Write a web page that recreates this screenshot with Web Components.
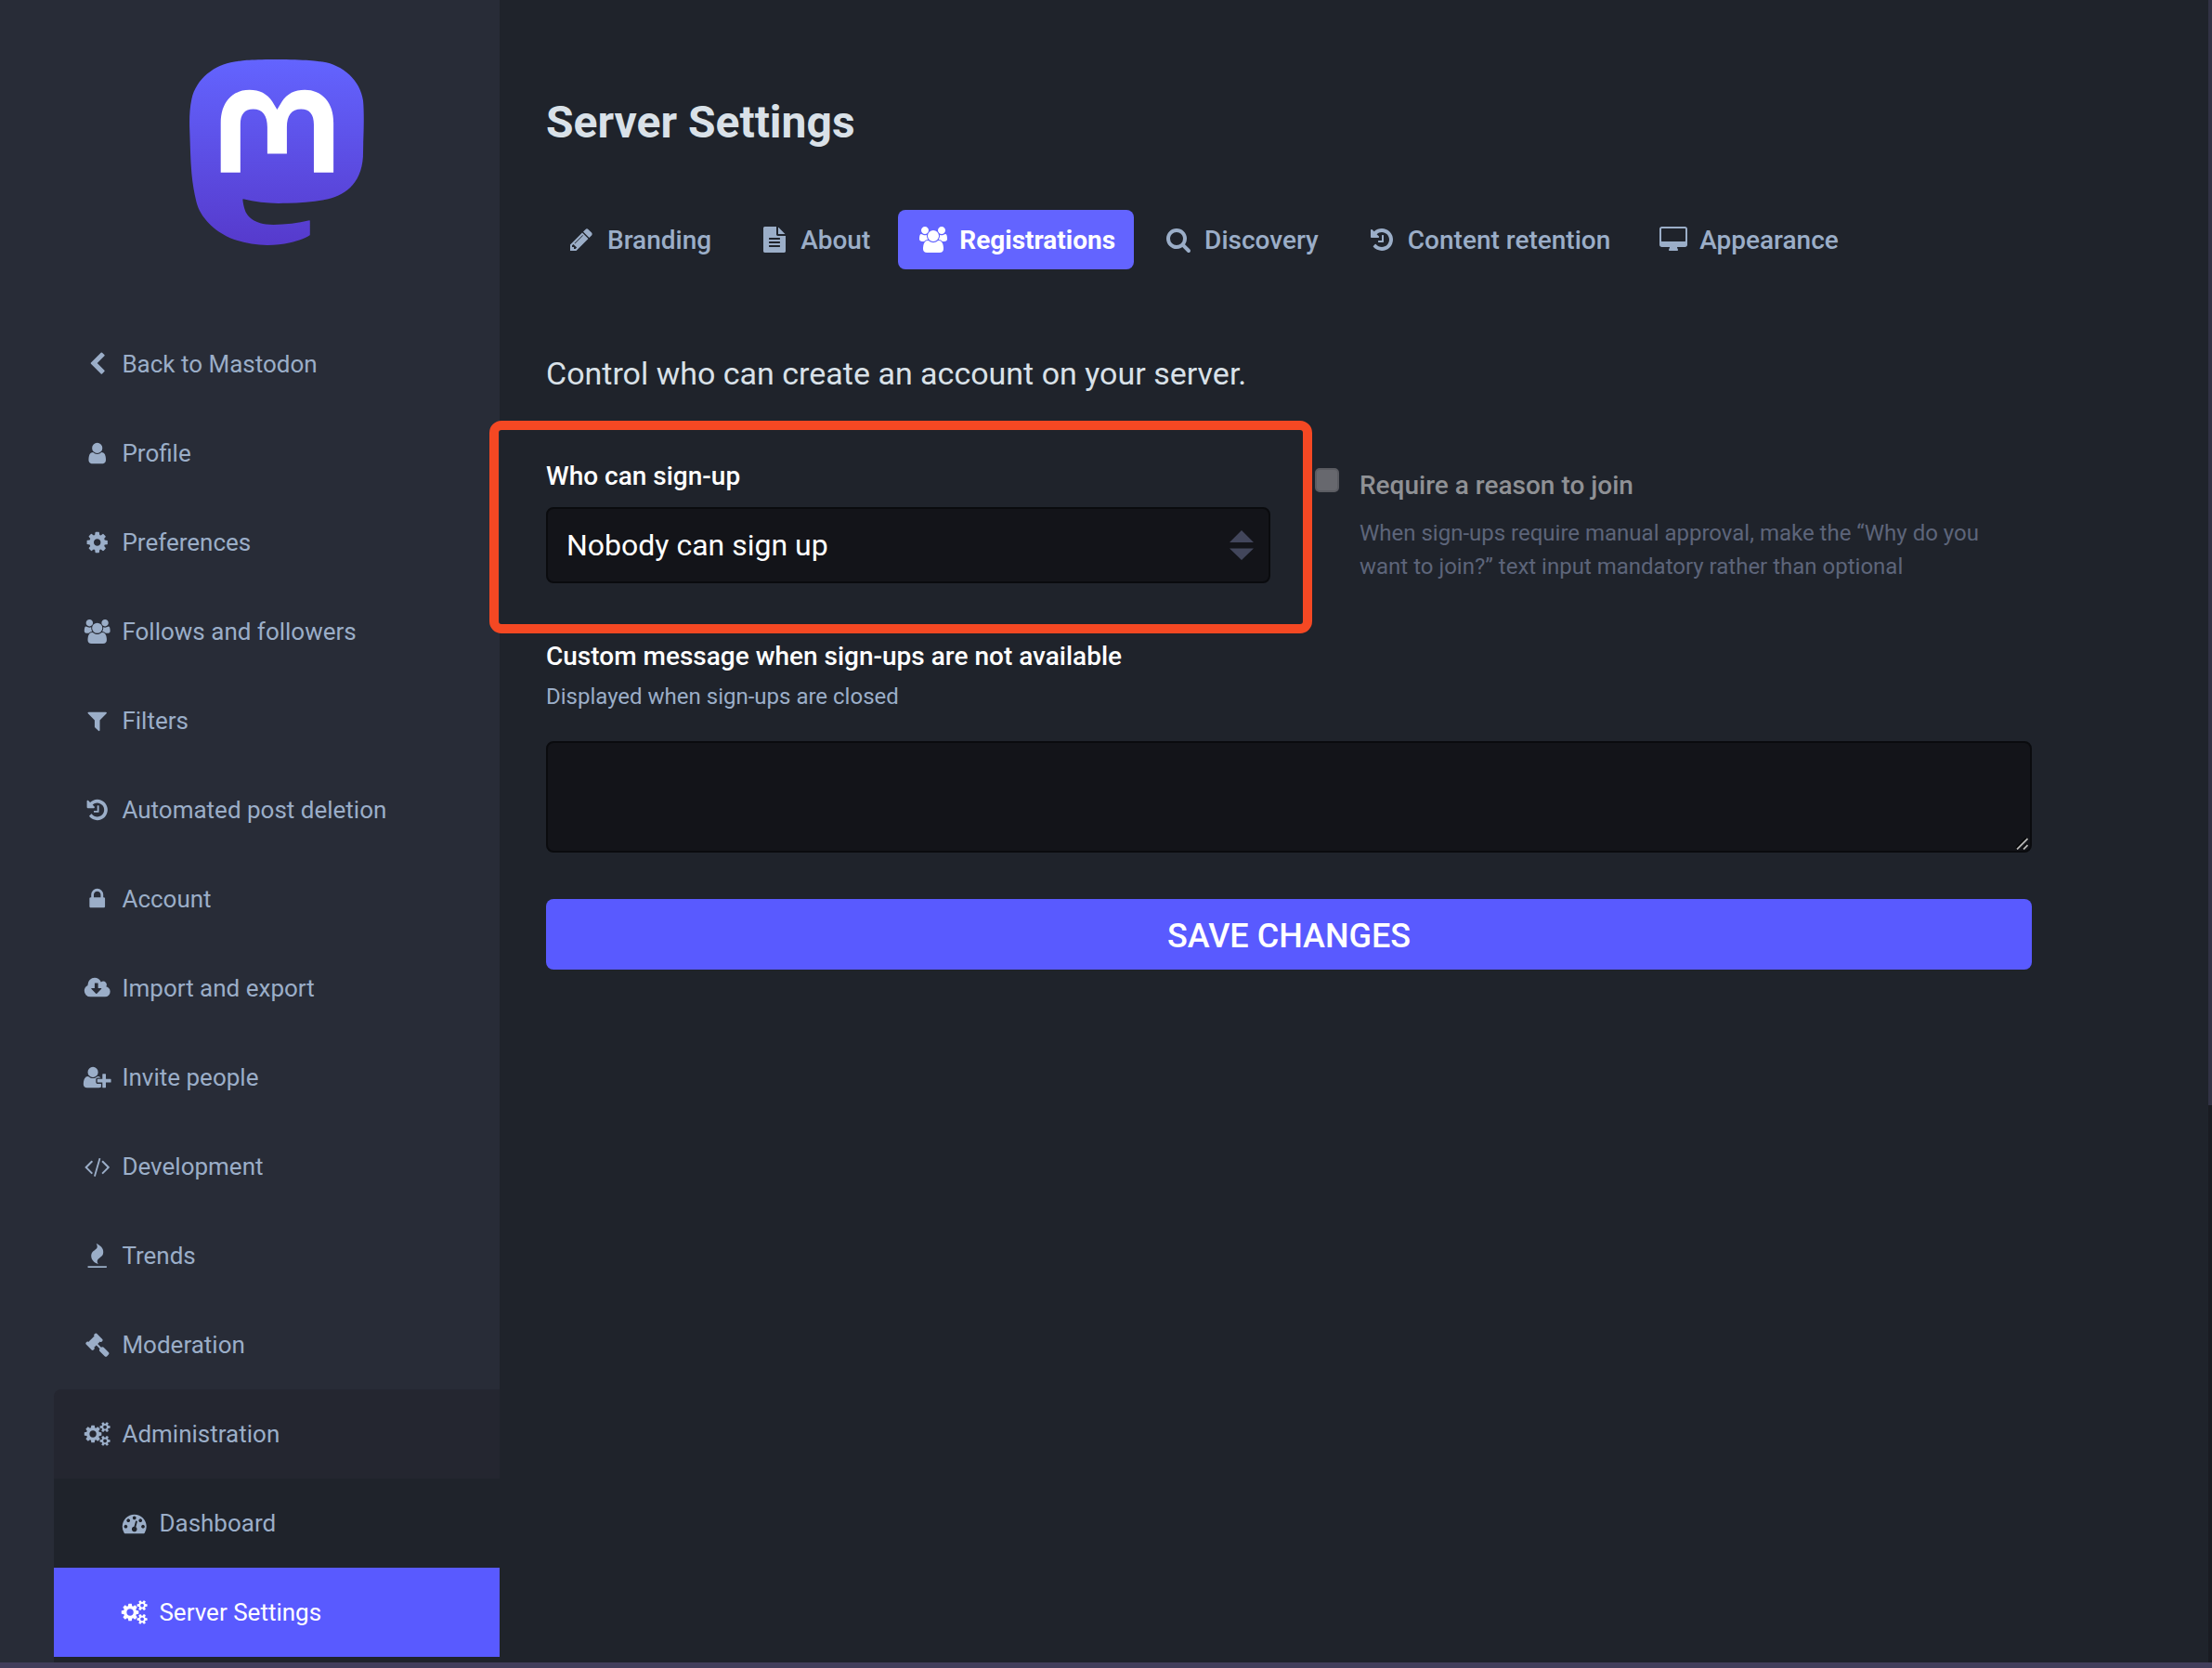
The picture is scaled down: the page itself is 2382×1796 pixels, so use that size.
<!DOCTYPE html>
<html lang="en">
<head>
<meta charset="utf-8">
<title>Server Settings</title>
<style>
html,body{margin:0;height:100%;background:#1f232b}
body{font-family:Roboto,"Liberation Sans",sans-serif;overflow:hidden}
</style>
</head>
<body>
<admin-shell>
  <admin-sidebar slot="sidebar">
    <menu-item icon="chevron">Back to Mastodon</menu-item>
    <menu-item icon="user">Profile</menu-item>
    <menu-item icon="cog">Preferences</menu-item>
    <menu-item icon="users">Follows and followers</menu-item>
    <menu-item icon="filter">Filters</menu-item>
    <menu-item icon="history">Automated post deletion</menu-item>
    <menu-item icon="lock">Account</menu-item>
    <menu-item icon="cloud">Import and export</menu-item>
    <menu-item icon="userplus">Invite people</menu-item>
    <menu-item icon="code">Development</menu-item>
    <menu-item icon="fire">Trends</menu-item>
    <menu-item icon="gavel">Moderation</menu-item>
    <menu-item icon="cogs" open>Administration</menu-item>
    <menu-item icon="gauge" nested>Dashboard</menu-item>
    <menu-item icon="cogs" nested selected>Server Settings</menu-item>
  </admin-sidebar>
  <settings-page>
    <tab-link slot="tabs" icon="pencil">Branding</tab-link>
    <tab-link slot="tabs" icon="file">About</tab-link>
    <tab-link slot="tabs" icon="users" selected>Registrations</tab-link>
    <tab-link slot="tabs" icon="search">Discovery</tab-link>
    <tab-link slot="tabs" icon="history">Content retention</tab-link>
    <tab-link slot="tabs" icon="desktop">Appearance</tab-link>
  </settings-page>
</admin-shell>
<script>
const ICONS = {
chevron:[1792,"M1427 301l-531 531 531 531q19 19 19 45t-19 45l-166 166q-19 19-45 19t-45-19l-742-742q-19-19-19-45t19-45l742-742q19-19 45-19t45 19l166 166q19 19 19 45t-19 45z"],
user:[1792,"M1536 1399q0 109-62.5 187t-150.5 78h-854q-88 0-150.5-78t-62.5-187q0-85 8.5-160.5t31.5-152 58.5-131 94-89 134.5-34.5q131 128 313 128t313-128q76 0 134.5 34.5t94 89 58.5 131 31.5 152 8.5 160.5zm-256-887q0 159-112.5 271.5t-271.5 112.5-271.5-112.5-112.5-271.5 112.5-271.5 271.5-112.5 271.5 112.5 112.5 271.5z"],
cog:[1792,"M1152 896q0-106-75-181t-181-75-181 75-75 181 75 181 181 75 181-75 75-181zm512-109v222q0 12-8 23t-20 13l-185 28q-19 54-39 91 35 50 107 138 10 12 10 25t-9 23q-27 37-99 108t-94 71q-12 0-26-9l-138-108q-44 23-91 38-16 136-29 186-7 28-36 28h-222q-14 0-24.5-8.5t-11.5-21.5l-28-184q-49-16-90-37l-141 107q-10 9-25 9-14 0-25-11-126-114-165-168-7-10-7-23 0-12 8-23 15-21 51-66.5t54-70.5q-27-50-41-99l-183-27q-13-2-21-12.5t-8-23.5v-222q0-12 8-23t19-13l186-28q14-46 39-92-40-57-107-138-10-12-10-24 0-10 9-23 26-36 98.5-107.5t94.5-71.5q13 0 26 10l138 107q44-23 91-38 16-136 29-186 7-28 36-28h222q14 0 24.5 8.5t11.5 21.5l28 184q49 16 90 37l142-107q9-9 24-9 13 0 25 10 129 119 165 170 7 8 7 22 0 12-8 23-15 21-51 66.5t-54 70.5q26 50 41 98l183 28q13 2 21 12.5t8 23.5z"],
users:[1920,"M593 896q-162 5-265 128h-134q-82 0-138-40.5t-56-118.5q0-353 124-353 6 0 43.5 21t97.5 42.5 119 21.5q67 0 133-23-5 37-5 66 0 139 81 256zm1071 637q0 120-73 189.5t-194 69.5h-874q-121 0-194-69.5t-73-189.5q0-53 3.5-103.5t14-109 26.5-108.5 43-97.5 62-81 85.5-53.5 111.5-20q10 0 43 21.5t73 48 107 48 135 21.5 135-21.5 107-48 73-48 43-21.5q61 0 111.5 20t85.5 53.5 62 81 43 97.5 26.5 108.5 14 109 3.5 103.5zm-1024-1277q0 106-75 181t-181 75-181-75-75-181 75-181 181-75 181 75 75 181zm704 384q0 159-112.5 271.5t-271.5 112.5-271.5-112.5-112.5-271.5 112.5-271.5 271.5-112.5 271.5 112.5 112.5 271.5zm576 225q0 78-56 118.5t-138 40.5h-134q-103-123-265-128 81-117 81-256 0-29-5-66 66 23 133 23 59 0 119-21.5t97.5-42.5 43.5-21q124 0 124 353zm-128-609q0 106-75 181t-181 75-181-75-75-181 75-181 181-75 181 75 75 181z"],
filter:[1792,"M1595 295q17 41-14 70l-493 493v742q0 42-39 59-13 5-25 5-27 0-45-19l-256-256q-19-19-19-45v-486l-493-493q-31-29-14-70 17-39 59-39h1280q42 0 59 39z"],
history:[1792,"M1664 896q0 156-61 298t-164 245-245 164-298 61q-172 0-327-72.5t-264-204.5q-7-10-6.5-22.5t8.5-20.5l137-138q10-9 25-9 16 2 23 12 73 95 179 147t225 52q104 0 198.5-40.5t163.5-109.5 109.5-163.5 40.5-198.5-40.5-198.5-109.5-163.5-163.5-109.5-198.5-40.5q-98 0-188 35.5t-160 101.5l137 138q31 30 14 69-17 40-59 40h-448q-26 0-45-19t-19-45v-448q0-42 40-59 39-17 69 14l130 129q107-101 244.5-156.5t284.5-55.5q156 0 298 61t245 164 164 245 61 298zm-640-288v448q0 14-9 23t-23 9h-320q-14 0-23-9t-9-23v-64q0-14 9-23t23-9h224v-352q0-14 9-23t23-9h64q14 0 23 9t9 23z"],
lock:[1792,"M640 768h512v-192q0-106-75-181t-181-75-181 75-75 181v192zm832 96v576q0 40-28 68t-68 28h-960q-40 0-68-28t-28-68v-576q0-40 28-68t68-28h32v-192q0-184 132-316t316-132 316 132 132 316v192h32q40 0 68 28t28 68z"],
cloud:[1920,"M1280 928q0-14-9-23t-23-9h-224v-352q0-13-9.5-22.5t-22.5-9.5h-192q-13 0-22.5 9.5t-9.5 22.5v352h-224q-13 0-22.5 9.5t-9.5 22.5q0 14 9 23l352 352q9 9 23 9t23-9l351-351q10-12 10-24zm640 224q0 159-112.5 271.5t-271.5 112.5h-1088q-185 0-316.5-131.5t-131.5-316.5q0-130 70-240t188-165q-2-30-2-43 0-212 150-362t362-150q156 0 285.5 87t188.5 231q71-62 166-62 106 0 181 75t75 181q0 76-41 138 130 31 213.5 135.5t83.5 238.5z"],
userplus:[2048,"M704 896q-159 0-271.5-112.5t-112.5-271.5 112.5-271.5 271.5-112.5 271.5 112.5 112.5 271.5-112.5 271.5-271.5 112.5zm960 128h352q13 0 22.5 9.5t9.5 22.5v192q0 13-9.5 22.5t-22.5 9.5h-352v352q0 13-9.5 22.5t-22.5 9.5h-192q-13 0-22.5-9.5t-9.5-22.5v-352h-352q-13 0-22.5-9.5t-9.5-22.5v-192q0-13 9.5-22.5t22.5-9.5h352v-352q0-13 9.5-22.5t22.5-9.5h192q13 0 22.5 9.5t9.5 22.5v352zm-736 224q0 52 38 90t90 38h256v238q-68 50-171 50h-874q-121 0-194-69t-73-190q0-53 3.5-103.5t14-109 26.5-108.5 43-97.5 62-81 85.5-53.5 111.5-20q19 0 39 17 79 61 154.5 91.5t164.5 30.5 164.5-30.5 154.5-91.5q20-17 39-17 132 0 217 96h-223q-52 0-90 38t-38 90v192z"],
code:[1920,"M617 1399l-50 50q-10 10-23 10t-23-10l-466-466q-10-10-10-23t10-23l466-466q10-10 23-10t23 10l50 50q10 10 10 23t-10 23l-393 393 393 393q10 10 10 23t-10 23zm591-1067l-373 1291q-4 13-15.5 19.5t-23.5 2.5l-62-17q-13-4-19.5-15.5t-2.5-24.5l373-1291q4-13 15.5-19.5t23.5-2.5l62 17q13 4 19.5 15.5t2.5 24.5zm657 651l-466 466q-10 10-23 10t-23-10l-50-50q-10-10-10-23t10-23l393-393-393-393q-10-10-10-23t10-23l50-50q10-10 23-10t23 10l466 466q10 10 10 23t-10 23z"],
fire:[1792,"M1600 1696v64q0 13-9.5 22.5t-22.5 9.5h-1344q-13 0-22.5-9.5t-9.5-22.5v-64q0-13 9.5-22.5t22.5-9.5h1344q13 0 22.5 9.5t9.5 22.5zm-256-1056q0 78-24.5 144t-64 112.5-87.5 88-96 77.5-87.5 72-64 81.5-24.5 96.5q0 96 67 224l-4-1 1 1q-90-41-160-83t-138.5-100-113.5-122.5-72.5-150.5-27.5-184q0-78 24.5-144t64-112.5 87.5-88 96-77.5 87.5-72 64-81.5 24.5-96.5q0-94-66-224l3 1-1-1q90 41 160 83t138.5 100 113.5 122.5 72.5 150.5 27.5 184z"],
gavel:[1792,"M1771 1536q0 53-37 90l-107 108q-39 37-91 37-53 0-90-37l-363-364q-38-36-38-90 0-53 43-96l-256-256-126 126q-14 14-34 14t-34-14q2 2 12.5 12t12.5 13 10 11.5 10 13.5 6 13.5 5.5 16.5 1.5 18q0 38-28 68-3 3-16.5 18t-19 20.5-18.5 16.5-22 15.5-22 9-26 4.5q-40 0-68-28l-408-408q-28-28-28-68 0-13 4.5-26t9-22 15.5-22 16.5-18.5 20.5-19 18-16.5q30-28 68-28 10 0 18 1.5t16.5 5.5 13.5 6 13.5 10 11.5 10 13 12.5 12 12.5q-14-14-14-34t14-34l348-348q14-14 34-14t34 14q-2-2-12.5-12t-12.5-13-10-11.5-10-13.5-6-13.5-5.5-16.5-1.5-18q0-38 28-68 3-3 16.5-18t19-20.5 18.5-16.5 22-15.5 22-9 26-4.5q40 0 68 28l408 408q28 28 28 68 0 13-4.5 26t-9 22-15.5 22-16.5 18.5-20.5 19-18 16.5q-30 28-68 28-10 0-18-1.5t-16.5-5.5-13.5-6-13.5-10-11.5-10-13-12.5-12-12.5q14 14 14 34t-14 34l-126 126 256 256q43-43 96-43 52 0 91 37l363 363q37 39 37 91z"],
cogs:[1920,"M896 896q0-106-75-181t-181-75-181 75-75 181 75 181 181 75 181-75 75-181zm768 512q0-52-38-90t-90-38-90 38-38 90q0 53 37.5 90.5t90.5 37.5 90.5-37.5 37.5-90.5zm0-1024q0-52-38-90t-90-38-90 38-38 90q0 53 37.5 90.5t90.5 37.5 90.5-37.5 37.5-90.5zm-384 421v185q0 10-7 19.5t-16 10.5l-155 24q-11 35-32 76 34 48 90 115 7 11 7 20 0 12-7 19-23 30-82.5 89.5t-78.5 59.5q-11 0-21-7l-115-90q-37 19-77 31-11 108-23 155-7 24-30 24h-186q-11 0-20-7.5t-10-17.5l-23-153q-34-10-75-31l-118 89q-7 7-20 7-11 0-21-8-144-133-144-160 0-9 7-19 10-14 41-53t47-61q-23-44-35-82l-152-24q-10-1-17-9.5t-7-19.5v-185q0-10 7-19.5t16-10.5l155-24q11-35 32-76-34-48-90-115-7-11-7-20 0-12 7-20 22-30 82-89t79-59q11 0 21 7l115 90q34-18 77-32 11-108 23-154 7-24 30-24h186q11 0 20 7.5t10 17.5l23 153q34 10 75 31l118-89q8-7 20-7 11 0 21 8 144 133 144 160 0 8-7 19-12 16-42 54t-45 60q23 48 34 82l152 23q10 2 17 10.5t7 19.5zm640 533v140q0 16-149 31-12 27-30 52 51 113 51 138 0 4-4 7-122 71-124 71-8 0-46-47t-52-68q-20 2-30 2t-30-2q-14 21-52 68t-46 47q-2 0-124-71-4-3-4-7 0-25 51-138-18-25-30-52-149-15-149-31v-140q0-16 149-31 13-29 30-52-51-113-51-138 0-4 4-7 4-2 35-20t59-34 30-16q8 0 46 46.5t52 67.5q20-2 30-2t30 2q51-71 92-112l6-2q4 0 124 70 4 3 4 7 0 25-51 138 17 23 30 52 149 15 149 31zm0-1024v140q0 16-149 31-12 27-30 52 51 113 51 138 0 4-4 7-122 71-124 71-8 0-46-47t-52-68q-20 2-30 2t-30-2q-14 21-52 68t-46 47q-2 0-124-71-4-3-4-7 0-25 51-138-18-25-30-52-149-15-149-31v-140q0-16 149-31 13-29 30-52-51-113-51-138 0-4 4-7 4-2 35-20t59-34 30-16q8 0 46 46.5t52 67.5q20-2 30-2t30 2q51-71 92-112l6-2q4 0 124 70 4 3 4 7 0 25-51 138 17 23 30 52 149 15 149 31z"],
gauge:[1792,"M384 1152q0-53-37.5-90.5t-90.5-37.5-90.5 37.5-37.5 90.5 37.5 90.5 90.5 37.5 90.5-37.5 37.5-90.5zm192-448q0-53-37.5-90.5t-90.5-37.5-90.5 37.5-37.5 90.5 37.5 90.5 90.5 37.5 90.5-37.5 37.5-90.5zm428 481l101-382q6-26-7.5-48.5t-38.5-29.5-48 6.5-30 39.5l-101 382q-60 5-107 43.5t-63 98.5q-20 77 20 146t117 89 146-20 89-117q16-60-6-117t-72-91zm660-33q0-53-37.5-90.5t-90.5-37.5-90.5 37.5-37.5 90.5 37.5 90.5 90.5 37.5 90.5-37.5 37.5-90.5zm-640-640q0-53-37.5-90.5t-90.5-37.5-90.5 37.5-37.5 90.5 37.5 90.5 90.5 37.5 90.5-37.5 37.5-90.5zm448 192q0-53-37.5-90.5t-90.5-37.5-90.5 37.5-37.5 90.5 37.5 90.5 90.5 37.5 90.5-37.5 37.5-90.5zm320 448q0 261-141 483-19 29-54 29h-1402q-35 0-54-29-141-221-141-483 0-182 71-348t191-286 286-191 348-71 348 71 286 191 191 286 71 348z"],
pencil:[1792,"M491 1536l91-91-235-235-91 91v107h128v128h107zm523-928q0-22-22-22-10 0-17 7l-542 542q-7 7-7 17 0 22 22 22 10 0 17-7l542-542q7-7 7-17zm-54-192l416 416-832 832h-416v-416zm683 96q0 53-37 90l-166 166-416-416 166-165q36-38 90-38 53 0 91 38l235 234q37 39 37 91z"],
file:[1792,"M1596 476q14 14 28 36h-472v-472q22 14 36 28zm-476 164h544v1056q0 40-28 68t-68 28h-1344q-40 0-68-28t-28-68v-1600q0-40 28-68t68-28h800v544q0 40 28 68t68 28zm160 736v-64q0-14-9-23t-23-9h-704q-14 0-23 9t-9 23v64q0 14 9 23t23 9h704q14 0 23-9t9-23zm0-256v-64q0-14-9-23t-23-9h-704q-14 0-23 9t-9 23v64q0 14 9 23t23 9h704q14 0 23-9t9-23zm0-256v-64q0-14-9-23t-23-9h-704q-14 0-23 9t-9 23v64q0 14 9 23t23 9h704q14 0 23-9t9-23z"],
search:[1792,"M1216 832q0-185-131.5-316.5t-316.5-131.5-316.5 131.5-131.5 316.5 131.5 316.5 316.5 131.5 316.5-131.5 131.5-316.5zm512 832q0 52-38 90t-90 38q-54 0-90-38l-343-342q-179 124-399 124-143 0-273.5-55.5t-225-150-150-225-55.5-273.5 55.5-273.5 150-225 225-150 273.5-55.5 273.5 55.5 225 150 150 225 55.5 273.5q0 220-124 399l343 343q37 37 37 90z"],
desktop:[1920,"M1792 992v-832q0-13-9.5-22.5t-22.5-9.5h-1600q-13 0-22.5 9.5t-9.5 22.5v832q0 13 9.5 22.5t22.5 9.5h1600q13 0 22.5-9.5t9.5-22.5zm128-832v1088q0 66-47 113t-113 47h-544q0 37 16 77.5t32 71 16 43.5q0 26-19 45t-45 19h-512q-26 0-45-19t-19-45q0-14 16-44t32-70 16-78h-544q-66 0-113-47t-47-113v-1088q0-66 47-113t113-47h1600q66 0 113 47t47 113z"]
};
function define(name, render){
  customElements.define(name, class extends HTMLElement{
    connectedCallback(){
      if(!this.shadowRoot) this.attachShadow({mode:'open'}).innerHTML = render(this);
    }
  });
}
define('fa-icon', el => {
  const [w,d] = ICONS[el.getAttribute('name')];
  return `<style>:host{display:inline-block;width:1.28571429em;height:1em;margin-right:10px;vertical-align:-.142857em}
  svg{display:block;width:100%;height:100%;fill:currentColor}</style>
  <svg viewBox="0 0 ${w} 1792"><path d="${d}"/></svg>`;
});
define('menu-item', el => `<style>
  :host{display:block;box-sizing:border-box;height:96px;padding:30px;font-size:26px;line-height:36px;color:#9baec8;white-space:nowrap}
  :host([open]){background:#242630;border-radius:8px 0 0 0}
  :host([nested]){background:#1f232b;padding-left:70px}
  :host([selected]){background:#595aff;color:#fff}
  </style><fa-icon name="${el.getAttribute('icon')}"></fa-icon><slot></slot>`);
define('tab-link', el => `<style>
  :host{display:block;padding:15px 20px 13px;border-radius:8px;font-size:28px;font-weight:500;line-height:36px;color:#9baec8;white-space:nowrap}
  :host([selected]){background:#6364ff;color:#fff;font-weight:700}
  </style><fa-icon name="${el.getAttribute('icon')}"></fa-icon><slot></slot>`);
define('brand-logo', () => `<style>:host{display:block;width:190px;height:200px}svg{display:block}</style>
  <svg width="190" height="200" viewBox="0 0 75 79"><defs><linearGradient id="g" x1="37" y1="0" x2="37" y2="79" gradientUnits="userSpaceOnUse"><stop stop-color="#6364FF"/><stop offset="1" stop-color="#563ACC"/></linearGradient></defs>
  <path fill="url(#g)" d="M73.8393 17.4898C72.6973 9.00165 65.2994 2.31235 56.5296 1.01614C55.05 0.797115 49.4441 0 36.4582 0H36.3612C23.3717 0 20.585 0.797115 19.1054 1.01614C10.5798 2.27644 2.79399 8.28712 0.904997 16.8758C-0.00358524 21.1056 -0.100549 25.7949 0.0682394 30.0965C0.308852 36.2651 0.355538 42.423 0.91577 48.5665C1.30307 52.6474 1.97872 56.6957 2.93763 60.6812C4.73325 68.042 12.0019 74.1676 19.1233 76.6666C26.7478 79.2728 34.9474 79.7055 42.8039 77.9162C43.6682 77.7151 44.5217 77.4817 45.3645 77.216C47.275 76.6092 49.5123 75.9305 51.1571 74.7385C51.1797 74.7217 51.2325 74.6229 51.2325 74.5948V68.6416C51.2321 68.6154 51.1444 68.4896 51.0171 68.4729C45.9835 69.675 40.8254 70.2777 35.6502 70.2682C26.7439 70.2682 24.3486 66.042 23.6626 64.2826C23.1113 62.762 22.7612 61.1759 22.6212 59.5646C22.6197 59.5375 22.73 59.3929 22.8367 59.3886C27.7864 60.5826 32.8604 61.1853 37.9522 61.1839C39.1768 61.1839 40.3978 61.1839 41.6224 61.1516C46.7435 61.008 52.1411 60.7459 57.1796 59.7621C57.3053 59.7369 57.431 59.7154 57.5387 59.6831C65.4861 58.157 73.0493 53.3672 73.8178 41.2381C73.8465 40.7606 73.9184 36.2364 73.9184 35.7409C73.9219 34.0569 74.4606 23.7949 73.8393 17.4898Z"/>
  <path fill="#fff" d="M61.2484 27.0263V48.114H52.8916V27.6475C52.8916 23.3388 51.096 21.1413 47.4437 21.1413C43.4287 21.1413 41.4177 23.7409 41.4177 28.8755V40.0782H33.1111V28.8755C33.1111 23.7409 31.0965 21.1413 27.0815 21.1413C23.4507 21.1413 21.6371 23.3388 21.6371 27.6475V48.114H13.2839V27.0263C13.2839 22.7176 14.384 19.2946 16.5843 16.7572C18.8539 14.2258 21.8311 12.926 25.5264 12.926C29.8036 12.926 33.0357 14.5705 35.1905 17.8559L37.2698 21.346L39.3527 17.8559C41.5074 14.5705 44.7395 12.926 49.0095 12.926C52.7013 12.926 55.6784 14.2258 57.9553 16.7572C60.1531 19.2922 61.2508 22.7152 61.2484 27.0263Z"/></svg>`);
define('admin-sidebar', () => `<style>
  :host{display:flex;flex-direction:column;box-sizing:border-box;width:538px;height:100%;padding:64px 0 0 58px;background:#282c37;overflow:hidden}
  brand-logo{margin:0 0 80px 146px;flex:none}
  nav{display:flex;flex-direction:column;flex:1;background:linear-gradient(transparent 1248px,#1f232b 0)}
  </style><brand-logo></brand-logo><nav><slot></slot></nav>`);
define('form-field', el => `<style>
  :host{display:flex;flex-direction:column}
  .l{padding-top:1px;font-size:28px;font-weight:500;line-height:35px;height:35px;color:#fff}
  .l span{display:block;line-height:36px}
  .h{margin-top:8px;font-size:24px;line-height:36px;color:#9baec8}
  </style><div class="l"><span>${el.getAttribute('label')}</span></div>${el.hasAttribute('hint')?`<div class="h">${el.getAttribute('hint')}</div>`:''}<slot></slot>`);
define('select-box', () => `<style>
  :host{display:flex;align-items:center;justify-content:space-between;box-sizing:border-box;width:780px;height:82px;margin-top:16px;padding:0 16px 0 20px;border:2px solid #0a0b0e;border-radius:8px;background:#131419;color:#fff;font-size:32px;line-height:38px}
  svg{display:block;fill:#42465b}
  </style><span><slot></slot></span><svg width="26" height="32" viewBox="0 0 26 32"><path d="M13 0L26 13H0zM0 19.500H26L13 32z"/></svg>`);
define('check-option', () => `<style>
  :host{display:flex;gap:22px;margin-top:10px;font-size:28px;line-height:36px}
  .b{box-sizing:border-box;width:26px;height:26px;border:2px solid #5b5c62;border-radius:5px;background:#67686e}
  .t{padding-top:1px;font-weight:500;color:#8f9195}
  .h{margin-top:15px;font-size:24px;color:#5d657a;white-space:nowrap}
  </style><div class="b"></div><div><div class="t"><slot></slot></div><div class="h"><slot name="hint"></slot></div></div>`);
define('text-area', () => `<style>
  :host{display:flex;justify-content:flex-end;align-items:flex-end;box-sizing:border-box;height:120px;margin-top:30px;padding:1px 2px;border:2px solid #0a0b0e;border-radius:8px;background:#131419}
  </style><svg width="13" height="13" viewBox="0 0 13 13" fill="none" stroke-width="1.800"><path stroke="#000" d="M0 11.500L11.500 0M7 12L12 7"/><path stroke="#b5b5b5" d="M1 12.500L12.500 1M8 12.500L12.500 8"/></svg>`);
define('save-button', () => `<style>
  :host{display:flex;align-items:center;justify-content:center;box-sizing:border-box;height:76px;padding-top:3px;margin-top:50px;border-radius:8px;background:#595aff;color:#fff;font-size:36px;font-weight:500;line-height:42px}
  </style><span><slot></slot></span>`);
define('highlight-frame', () => `<style>
  :host{position:absolute;left:-61px;top:-41px;width:866px;height:209px;border:10px solid #f54823;border-radius:13px}
  </style>`);
define('settings-page', () => `<style>
  :host{display:block;box-sizing:border-box;width:1650px;padding:104px 0 0 50px}
  h2{margin:0;font-size:48px;font-weight:700;line-height:56px;color:#d9e1e8}
  nav{display:flex;gap:10px;margin-top:66px}
  p{margin:90px 0 0;font-size:34px;line-height:44px;color:#d9e1e8}
  .row{position:relative;display:flex;gap:48px;height:134px;margin:70px 0 60px}
  </style>
  <h2>Server Settings</h2>
  <nav><slot name="tabs"></slot></nav>
  <p>Control who can create an account on your server.</p>
  <div class="row">
    <form-field label="Who can sign-up"><select-box>Nobody can sign up</select-box></form-field>
    <check-option>Require a reason to join<span slot="hint">When sign-ups require manual approval, make the “Why do you<br>want to join?” text input mandatory rather than optional</span></check-option>
    <highlight-frame></highlight-frame>
  </div>
  <form-field label="Custom message when sign-ups are not available" hint="Displayed when sign-ups are closed"><text-area></text-area></form-field>
  <save-button>SAVE CHANGES</save-button>`);
define('admin-shell', () => `<style>
  :host{display:grid;grid-template:1790px 6px / 538px 1fr 4px;width:2382px;height:1796px;background:#1f232b}
  .rail{background:linear-gradient(#313244 1190px,#191b22 0)}
  .foot{grid-column:1/-1;background:#423e5b}
  slot[name=sidebar]::slotted(*){min-height:0}
  </style><slot name="sidebar"></slot><div><slot></slot></div><div class="rail"></div><div class="foot"></div>`);
</script>
</body>
</html>
